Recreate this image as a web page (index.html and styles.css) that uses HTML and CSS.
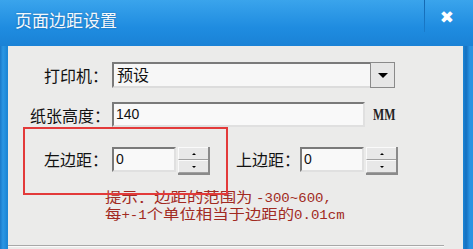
FILE: index.html
```html
<!DOCTYPE html>
<html lang="zh-CN">
  <head>
    <meta charset="UTF-8" />
    <title>页面边距设置</title>
    <link rel="stylesheet" href="styles.css">
  </head>
  <body>
    <div class="window">
      <div class="titlebar">
        <span class="title">页面边距设置</span>
        <span class="close">&#x2716;</span>
      </div>
      <div class="content">
        <div class="row row-printer">
          <label class="label">打印机：</label>
          <div class="select">
            <span class="select-text">预设</span>
            <span class="select-btn"><span class="arrow"></span></span>
          </div>
        </div>
        <div class="row row-height">
          <label class="label">纸张高度：</label>
          <div class="input input-wide">140</div>
          <span class="unit">MM</span>
        </div>
        <div class="row row-margin">
          <label class="label">左边距：</label>
          <div class="input input-small">0</div>
          <div class="spinner">
            <span class="spin-up"><span class="tri-up"></span></span>
            <span class="spin-down"><span class="tri-down"></span></span>
          </div>
          <label class="label-top">上边距：</label>
          <div class="input input-small">0</div>
          <div class="spinner">
            <span class="spin-up"><span class="tri-up"></span></span>
            <span class="spin-down"><span class="tri-down"></span></span>
          </div>
        </div>
        <div class="hint">
          <p>提示：边距的范围为 <span class="num">-300~600,</span></p>
          <p>每<span class="num">+-1</span>个单位相当于边距的<span class="num">0.01cm</span></p>
        </div>
        <div class="divider"></div>
        <div class="highlight"></div>
      </div>
    </div>
  </body>
</html>
```

FILE: styles.css
```css
body {
  margin: 0;
  padding: 0;
  background-color: #1c86d6;
  font-family: "Noto Sans CJK SC", sans-serif;
  overflow: hidden;
}
.window {
  width: 473px;
  height: 249px;
  overflow: hidden;
  background: linear-gradient(to right, #1a78c8 0px, #2a96e4 3px, #1c86d6 7px, #1c86d6 463px, #1570c0 466px, #2a94e2 470px);
}
.titlebar {
  height: 46px;
  display: flex;
  align-items: flex-start;
  background: linear-gradient(to bottom, #3aa4ec, #1f8ce0 60%, #1a82d6);
  position: relative;
}
.title {
  color: #f4f8fc;
  font-size: 17px;
  line-height: 20px;
  margin: 10px 0 0 15px;
  text-shadow: 0 0 2px rgba(0, 40, 90, 0.4);
}
.titlebar::after {
  content: "";
  position: absolute;
  left: 424px;
  top: 0;
  width: 1px;
  height: 32px;
  background: linear-gradient(to bottom, #1468b0, #1a7ccc);
}
.close {
  margin-left: auto;
  margin-right: 19px;
  margin-top: 7px;
  color: #ffffff;
  font-size: 17px;
  font-family: "DejaVu Sans", sans-serif;
  font-weight: bold;
}
.content {
  position: relative;
  margin: 0 10px 0 8px;
  height: 203px;
  padding-top: 16px;
  box-sizing: border-box;
  background-color: #ebebea;
  color: #111;
}
.row {
  display: flex;
  align-items: center;
}
.label {
  width: 100px;
  text-align: right;
  padding-right: 4px;
  font-size: 16px;
}
.row-height .label {
  width: 102px;
  padding-right: 2px;
}
.row-height {
  margin-top: 14px;
}
.row-margin {
  margin-top: 16px;
}
.select {
  display: flex;
  width: 283px;
  height: 26px;
  box-sizing: border-box;
  border: 2px solid #7a7a7a;
  border-right-color: #dcdcdc;
  border-bottom-color: #dcdcdc;
  background-color: #f7f7f7;
}
.select-text {
  flex: 1;
  font-size: 16px;
  line-height: 21px;
  padding-left: 3px;
}
.select-btn {
  width: 25px;
  margin: -2px -2px -2px 0;
  box-sizing: border-box;
  border: 1px solid #8a8a8a;
  background-color: #e6e6e6;
  display: flex;
  align-items: center;
  justify-content: center;
}
.arrow {
  width: 0;
  height: 0;
  border-left: 5px solid transparent;
  border-right: 5px solid transparent;
  border-top: 5px solid #000;
}
.input {
  height: 25px;
  box-sizing: border-box;
  border: 2px solid #7a7a7a;
  border-right-color: #e0e0e0;
  border-bottom-color: #e0e0e0;
  background-color: #f9f9f9;
  font-family: "Liberation Sans", sans-serif;
  font-size: 14px;
  line-height: 20px;
  padding-left: 2px;
}
.input-wide {
  width: 253px;
}
.input-small {
  width: 64px;
}
.unit {
  margin-left: 8px;
  font-family: "Liberation Serif", serif;
  font-size: 16px;
  font-weight: bold;
  transform: scaleX(0.74);
  transform-origin: left center;
  color: #222;
}
.spinner {
  width: 32px;
  height: 28px;
  margin-left: 2px;
  margin-top: 4px;
  display: flex;
  flex-direction: column;
  box-sizing: border-box;
  border-right: 2px solid #8a8a8a;
  border-bottom: 2px solid #8a8a8a;
}
.spin-up,
.spin-down {
  flex: 1;
  display: flex;
  align-items: center;
  justify-content: center;
  background-color: #e8e8e8;
  border-top: 1px solid #fafafa;
  border-left: 1px solid #fafafa;
  border-bottom: 1px solid #a0a0a0;
}
.tri-up {
  border-left: 2px solid transparent;
  border-right: 2px solid transparent;
  border-bottom: 2px solid #000;
}
.tri-down {
  border-left: 2px solid transparent;
  border-right: 2px solid transparent;
  border-top: 2px solid #000;
}
.label-top {
  margin-left: 26px;
  width: 64px;
  font-size: 16px;
}
.hint {
  margin: 14px 0 0 97px;
  color: #a12a22;
  font-size: 14px;
  line-height: 14px;
}
.hint p {
  margin: 0;
  width: max-content;
  white-space: nowrap;
  transform: scaleX(1.17);
  transform-origin: left top;
}
.hint .num {
  font-family: "Liberation Mono", monospace;
  font-size: 12px;
}
.divider {
  margin-top: 22px;
  width: 436px;
  height: 1px;
  background-color: #a8a8a8;
  border-bottom: 1px solid #fafafa;
}
.highlight {
  position: absolute;
  left: 15px;
  top: 81px;
  width: 205px;
  height: 68px;
  box-sizing: border-box;
  border: 2px solid #e33a3a;
}
```
